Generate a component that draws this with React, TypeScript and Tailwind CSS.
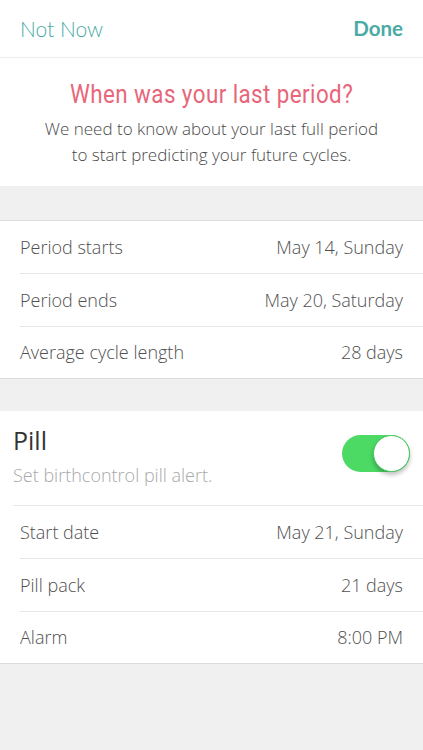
import React from "react";

const font = { fontFamily: '"Open Sans", "Noto Sans", sans-serif' };

function Row({ label, value, last }: { label: string; value: string; last?: boolean }) {
  return (
    <div className="pl-5">
      <div className={last ? "flex h-[51px] items-center justify-between pr-5" : "flex h-[53px] items-center justify-between border-b border-[#e6e6e6] pr-5"}>
        <span className="text-[18px] font-light text-[#505050]">{label}</span>
        <span className="text-[18px] font-light text-[#505050]">{value}</span>
      </div>
    </div>
  );
}

export default function App() {
  return (
    <div className="flex h-[750px] w-[423px] flex-col bg-[#f0f0f0]" style={font}>
      <div className="flex h-[58px] items-center justify-between border-b border-[#ececec] bg-white px-5">
        <span className="text-[21px] text-[#4aaaa6]" style={{ fontFamily: '"Lato", sans-serif', fontWeight: 300 }}>Not Now</span>
        <span className="text-[20.5px] font-bold text-[#4aaaa6]" style={{ fontFamily: '"Lato", sans-serif' }}>Done</span>
      </div>
      <div className="flex h-[128px] flex-col items-center bg-white pt-[17px]">
        <div className="text-[26px] tracking-[0.5px] text-[#e8667a]" style={{ fontFamily: '"Roboto", sans-serif', fontWeight: 400, transform: "scaleX(0.86)" }}>When was your last period?</div>
        <div className="mt-[2px] text-center text-[17px] font-light leading-[26px] text-[#4a4a4a]">
          We need to know about your last full period
          <br />
          to start predicting your future cycles.
        </div>
      </div>
      <div className="h-[34px]" />
      <div className="border-y border-[#dcdcdc] bg-white">
        <Row label="Period starts" value="May 14, Sunday" />
        <Row label="Period ends" value="May 20, Saturday" />
        <Row label="Average cycle length" value="28 days" last />
      </div>
      <div className="h-[32px]" />
      <div className="border-b border-[#dcdcdc] bg-white">
        <div className="pl-[13px]">
          <div className="flex h-[95px] items-start justify-between border-b border-[#e6e6e6] pr-[13px] pt-[13px]">
            <div className="flex flex-col">
              <span className="text-[25px] font-normal leading-[32px] text-[#333]">Pill</span>
              <span className="mt-[6px] text-[18px] font-light leading-[26px] text-[#a8a8a8]">Set birthcontrol pill alert.</span>
            </div>
            <div className="relative mt-[11px] h-[37px] w-[68px] rounded-full bg-[#4cd964]">
              <div className="absolute right-0 top-0 h-[37px] w-[37px] rounded-full border border-[#45c85a] bg-white shadow-[0_3px_4px_rgba(0,0,0,0.25)]" />
            </div>
          </div>
        </div>
        <Row label="Start date" value="May 21, Sunday" />
        <Row label="Pill pack" value="21 days" />
        <Row label="Alarm" value="8:00 PM" last />
      </div>
    </div>
  );
}
